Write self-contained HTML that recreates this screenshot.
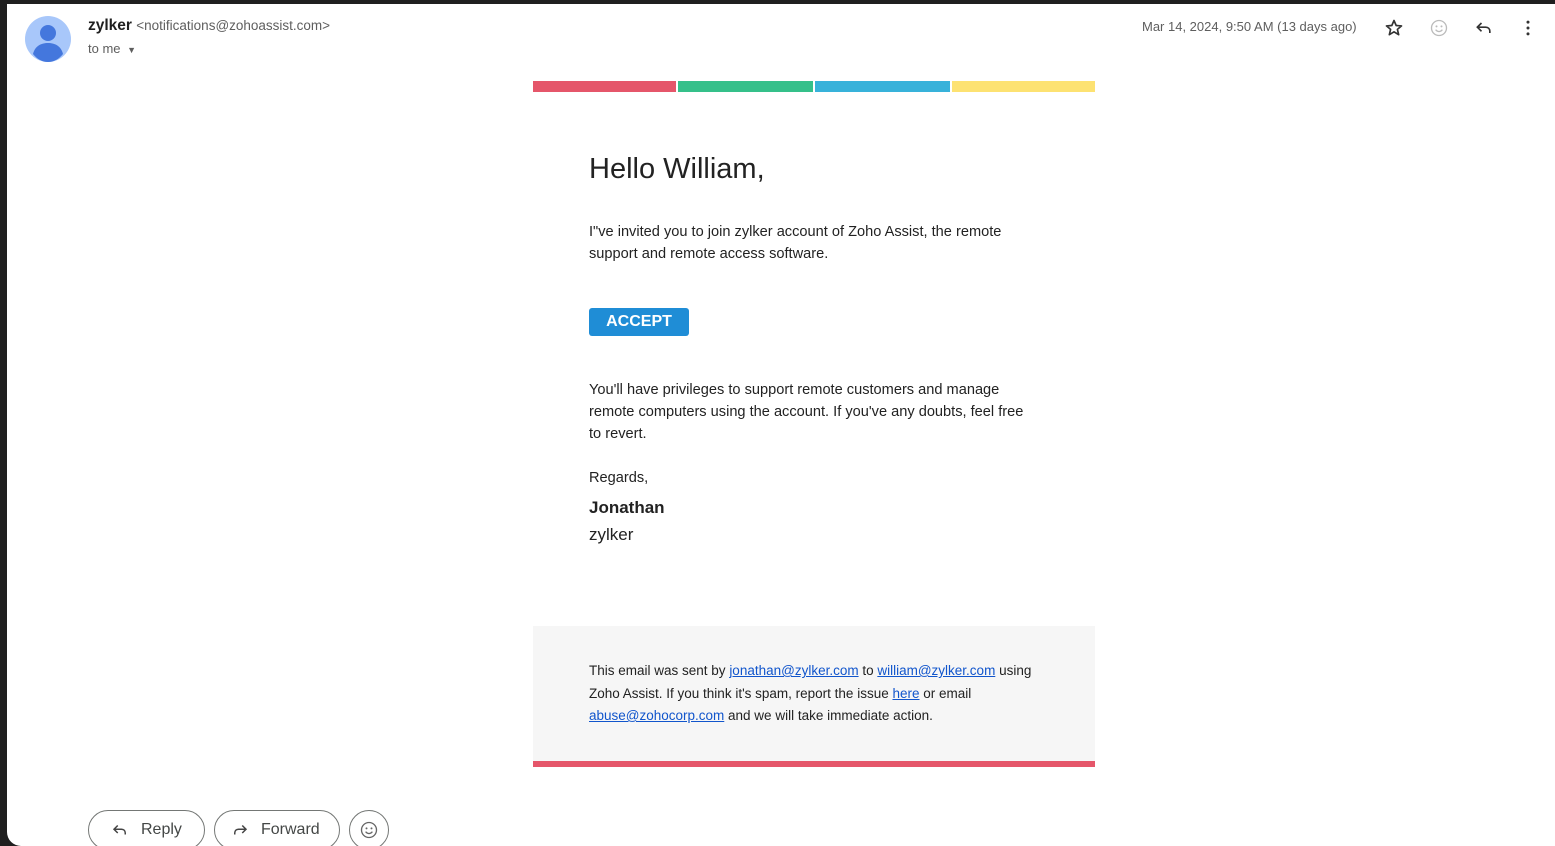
<!DOCTYPE html>
<html><head><style>
*{margin:0;padding:0;box-sizing:border-box}
body{width:1555px;height:846px;background:#1f1f1f;overflow:hidden;font-family:"Liberation Sans",Arial,sans-serif;position:relative}
#main{position:absolute;left:7px;top:4px;width:1548px;height:842px;background:#fff;border-radius:0 0 0 14px;overflow:hidden}
.a{position:absolute}
a{text-decoration:underline;color:#1155cc}
.btn{position:absolute;top:806px;height:40px;border:1px solid #747775;border-radius:20px;font-size:16px;color:#444746;display:flex;align-items:center}
</style></head><body>
<div id="main">
<svg class="a" style="left:18px;top:12px" width="46" height="46" viewBox="0 0 46 46"><circle cx="23" cy="23" r="23" fill="#a8c7fa"/><circle cx="23" cy="17" r="8" fill="#4477dd"/><path d="M8 38c2-8 8-11 15-11s13 3 15 11c-4 5-9 8-15 8s-11-3-15-8z" fill="#4477dd"/></svg>
<div class="a" style="left:81px;top:13px;font-size:15.5px;color:#1f1f1f;font-weight:bold">zylker <span style="font-weight:normal;font-size:13.5px;color:#5e5e5e">&lt;notifications@zohoassist.com&gt;</span></div>
<div class="a" style="left:81px;top:37px;font-size:13px;color:#5e5e5e">to me <span style="font-size:9px;margin-left:3px">▼</span></div>
<div class="a" style="left:1135px;top:15px;font-size:13px;color:#5e5e5e">Mar 14, 2024, 9:50 AM (13 days ago)</div>
<svg class="a" style="left:1377px;top:14px" width="20" height="20" viewBox="0 0 24 24"><path d="M12 3l2.6 6 6.4.5-4.9 4.2 1.5 6.3L12 16.6 6.4 20l1.5-6.3L3 9.5l6.4-.5z" fill="none" stroke="#333" stroke-width="2" stroke-linejoin="round"/></svg>
<svg class="a" style="left:1422px;top:14px" width="20" height="20" viewBox="0 0 24 24"><circle cx="12" cy="12" r="9" fill="none" stroke="#bbb" stroke-width="1.6"/><circle cx="9" cy="10" r="1.2" fill="#bbb"/><circle cx="15" cy="10" r="1.2" fill="#bbb"/><path d="M8 14c2 3 6 3 8 0" fill="none" stroke="#bbb" stroke-width="1.6"/></svg>
<svg class="a" style="left:1467px;top:14px" width="20" height="20" viewBox="0 0 24 24"><path d="M9 6l-5 5 5 5M4 11h10c3 0 5 2 5 5v2" fill="none" stroke="#333" stroke-width="2"/></svg>
<svg class="a" style="left:1511px;top:14px" width="20" height="20" viewBox="0 0 24 24"><circle cx="12" cy="5" r="1.8" fill="#333"/><circle cx="12" cy="12" r="1.8" fill="#333"/><circle cx="12" cy="19" r="1.8" fill="#333"/></svg>

<div class="a" style="left:526px;top:77px;width:143px;height:11px;background:#e5566a"></div>
<div class="a" style="left:671px;top:77px;width:135px;height:11px;background:#35c08a"></div>
<div class="a" style="left:808px;top:77px;width:135px;height:11px;background:#38b2da"></div>
<div class="a" style="left:945px;top:77px;width:143px;height:11px;background:#fde272"></div>

<div class="a" style="left:582px;top:149px;font-size:29px;color:#222">Hello William,</div>
<div class="a" style="left:582px;top:217px;font-size:14.6px;line-height:22px;color:#222;width:440px">I"ve invited you to join zylker account of Zoho Assist, the remote support and remote access software.</div>
<div class="a" style="left:582px;top:304px;width:100px;height:28px;background:#1f8dd6;border-radius:3px;color:#fff;font-weight:bold;font-size:16px;text-align:center;line-height:28px">ACCEPT</div>
<div class="a" style="left:582px;top:375px;font-size:14.6px;line-height:22px;color:#222;width:445px">You'll have privileges to support remote customers and manage remote computers using the account. If you've any doubts, feel free to revert.</div>
<div class="a" style="left:582px;top:466px;font-size:14.6px;color:#222">Regards,</div>
<div class="a" style="left:582px;top:494px;font-size:17px;font-weight:bold;color:#222">Jonathan</div>
<div class="a" style="left:582px;top:521px;font-size:17px;color:#222">zylker</div>

<div class="a" style="left:526px;top:622px;width:562px;height:135px;background:#f6f6f6"></div>
<div class="a" style="left:526px;top:757px;width:562px;height:6px;background:#e5566a"></div>
<div class="a" style="left:582px;top:656px;font-size:13.5px;line-height:22.5px;color:#222;width:450px">This email was sent by <a>jonathan@zylker.com</a> to <a>william@zylker.com</a> using Zoho Assist. If you think it's spam, report the issue <a>here</a> or email <a>abuse@zohocorp.com</a> and we will take immediate action.</div>

<div class="btn" style="left:81px;width:117px;padding-left:22px"><svg width="18" height="18" viewBox="0 0 24 24"><path d="M9 6l-5 5 5 5M4 11h10c3 0 5 2 5 5v2" fill="none" stroke="#444" stroke-width="2"/></svg><span style="margin-left:12px">Reply</span></div>
<div class="btn" style="left:207px;width:126px;padding-left:16px"><svg width="18" height="18" viewBox="0 0 24 24"><path d="M15 6l5 5-5 5M20 11H10c-3 0-5 2-5 5v2" fill="none" stroke="#444" stroke-width="2"/></svg><span style="margin-left:12px">Forward</span></div>
<div class="btn" style="left:342px;width:40px;justify-content:center"><svg width="20" height="20" viewBox="0 0 24 24"><circle cx="12" cy="12" r="9" fill="none" stroke="#666" stroke-width="1.6"/><circle cx="9" cy="10" r="1.2" fill="#666"/><circle cx="15" cy="10" r="1.2" fill="#666"/><path d="M8 14c2 3 6 3 8 0" fill="none" stroke="#666" stroke-width="1.6"/></svg></div>
</div>
</body></html>
